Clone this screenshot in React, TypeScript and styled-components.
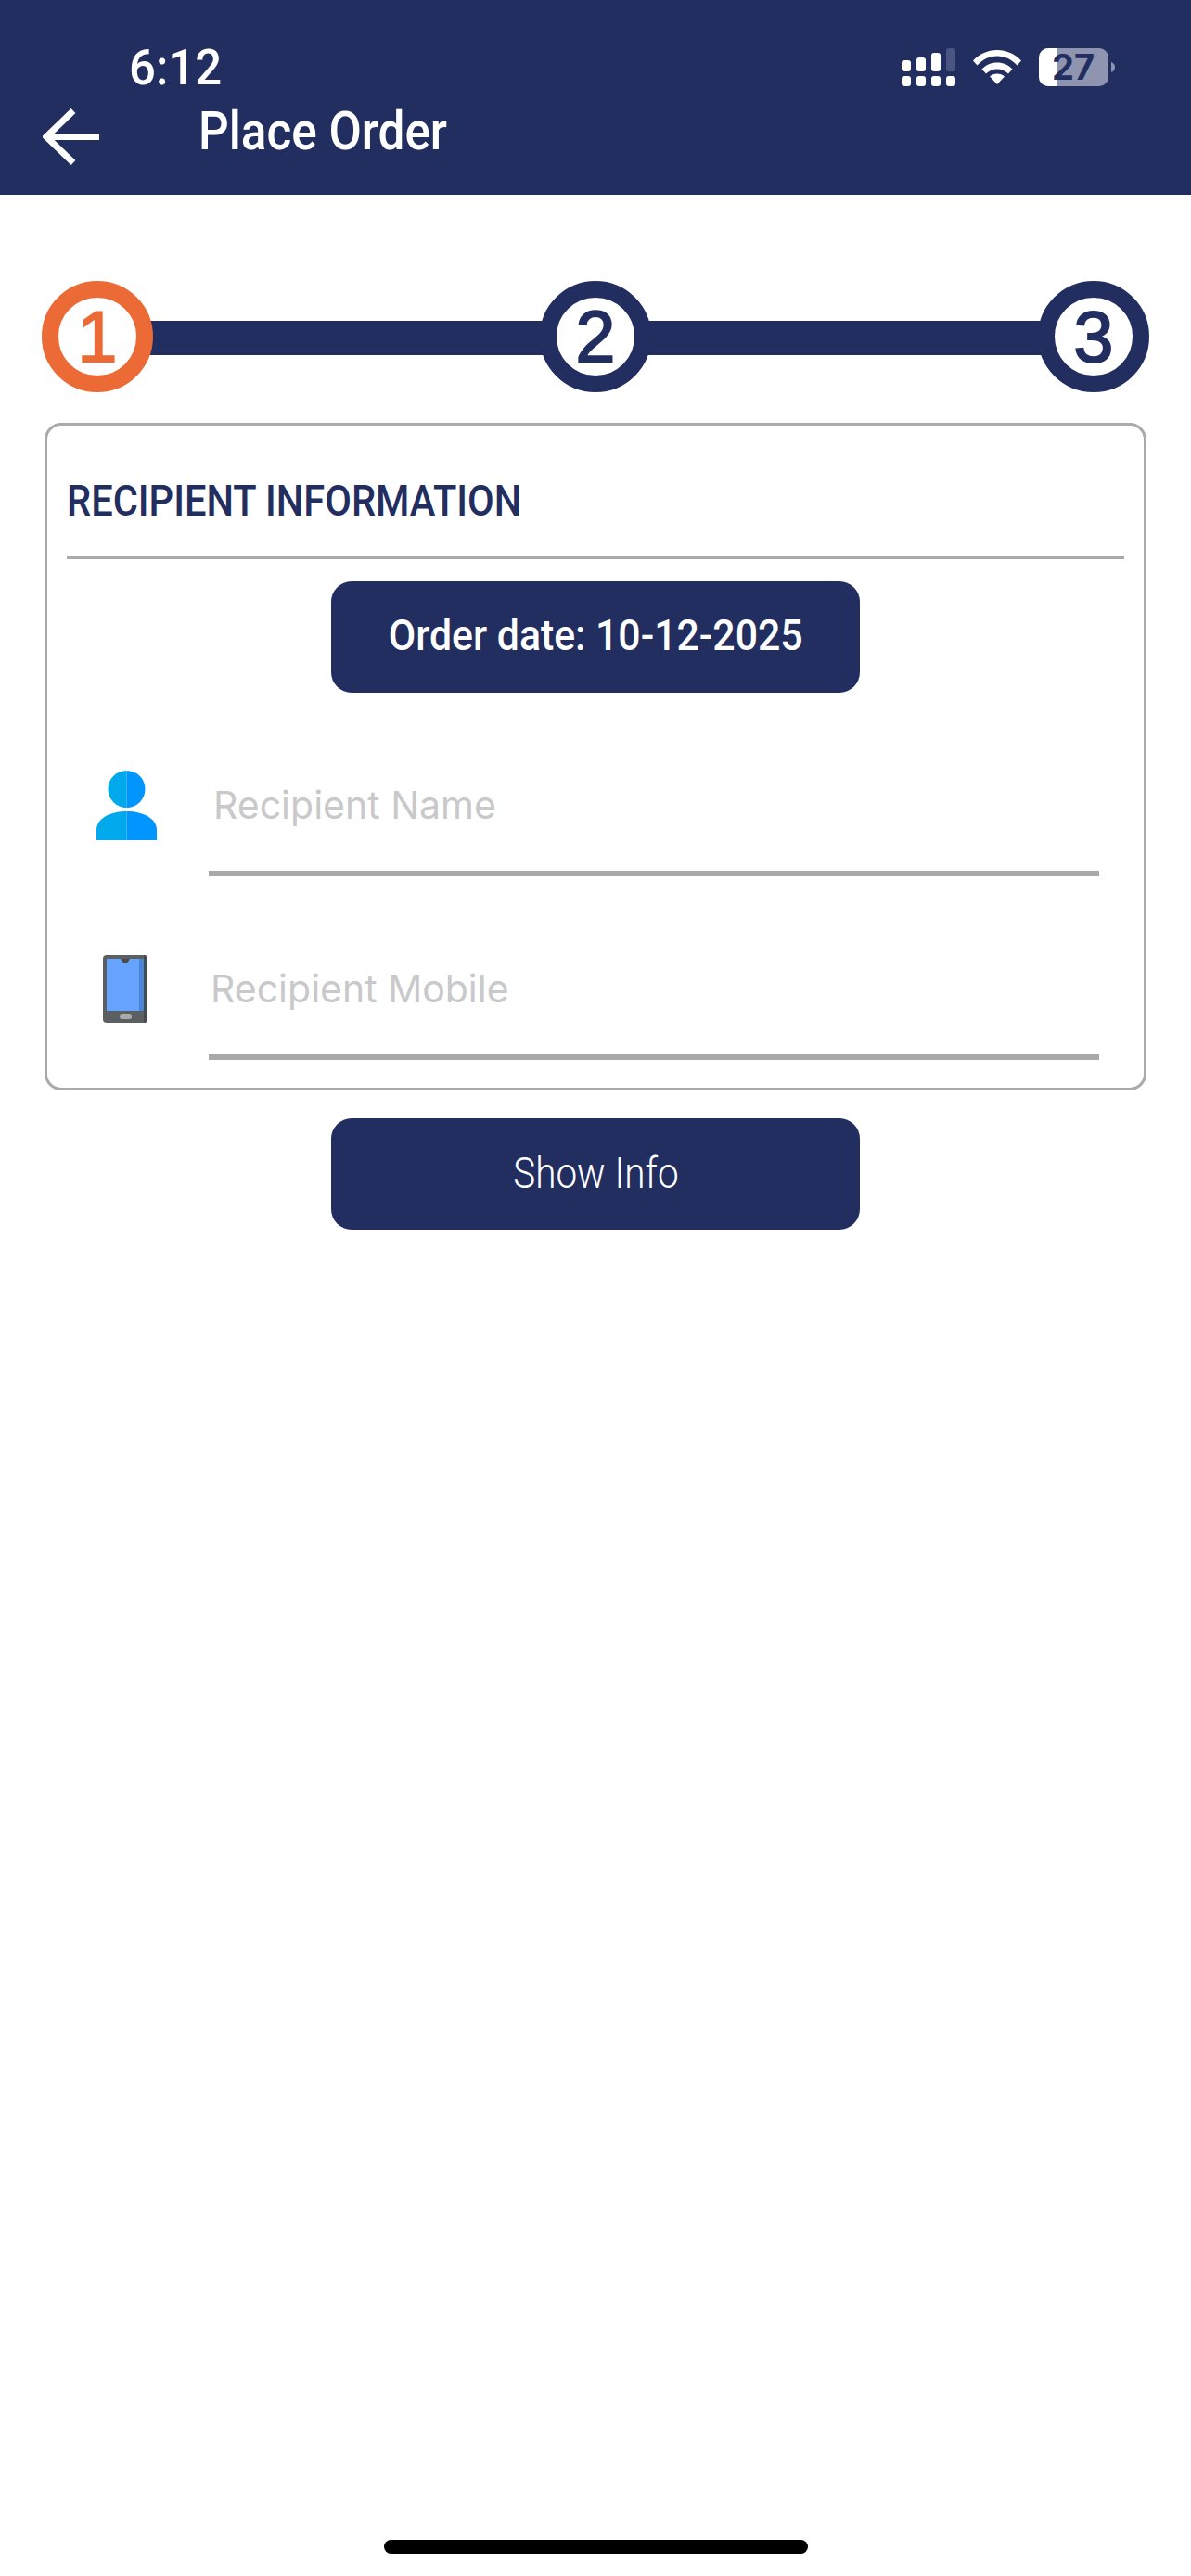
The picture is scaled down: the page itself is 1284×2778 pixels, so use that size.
import styled, { createGlobalStyle } from "styled-components";

const navy = "#222e60";
const orange = "#ec6a35";
const din = `"Roboto", "Liberation Sans", sans-serif`;

const GlobalStyle = createGlobalStyle`
  html, body {
    margin: 0;
    padding: 0;
    background: #fff;
  }
  * {
    box-sizing: border-box;
  }
`;

const Page = styled.div`
  width: 1284px;
  min-height: 2778px;
  display: flex;
  flex-direction: column;
  background: #fff;
`;

const Header = styled.header`
  height: 210px;
  background: ${navy};
  display: flex;
  flex-direction: column;
  padding-top: 47px;
`;

const StatusBar = styled.div`
  display: flex;
  align-items: center;
  justify-content: space-between;
  height: 50px;
  padding: 0 82px 0 139px;
`;

const Clock = styled.span`
  display: inline-block;
  padding-top: 2px;
  font: 500 53px/50px ${din};
  color: #fff;
  transform: scaleX(0.96);
  transform-origin: left center;
`;

const StatusIcons = styled.div`
  display: flex;
  align-items: center;
  gap: 19px;
`;

const Battery = styled.div`
  position: relative;
  width: 82px;
  height: 41px;
`;

const BatteryLevel = styled.span`
  position: absolute;
  inset: 0;
  display: flex;
  align-items: center;
  justify-content: center;
  padding-right: 8px;
  font: 700 38px/41px "Inter", sans-serif;
  color: ${navy};
`;

const TopBar = styled.div`
  display: flex;
  align-items: center;
  height: 60px;
  margin-top: 15px;
  padding-left: 46px;
`;

const BackButton = styled.button`
  display: flex;
  width: 61px;
  height: 61px;
  margin-top: 10px;
  padding: 0;
  border: 0;
  background: none;
`;

const PageTitle = styled.h1`
  display: inline-block;
  margin: 0 0 0 107px;
  font: 500 57px/60px ${din};
  color: #fff;
  white-space: nowrap;
  transform: scaleX(0.9);
  transform-origin: left center;
`;

const Stepper = styled.div`
  display: flex;
  align-items: center;
  margin: 93px 45px 33px;
`;

const Step = styled.div<{ $active?: boolean }>`
  position: relative;
  z-index: 1;
  flex: none;
  width: 120px;
  height: 120px;
  display: flex;
  align-items: center;
  justify-content: center;
  border: 18px solid ${(p) => (p.$active ? orange : navy)};
  border-radius: 50%;
  background: #fff;
  font: 400 77px/84px "Liberation Sans", sans-serif;
  -webkit-text-stroke: 2px ${(p) => (p.$active ? orange : navy)};
  color: ${(p) => (p.$active ? orange : navy)};
`;

const Connector = styled.div`
  flex: 1;
  height: 37px;
  margin: 2px -4px 0;
  background: ${navy};
`;

const Card = styled.section`
  width: 1188px;
  margin: 0 48px;
  padding: 51px 21px 30px;
  border: 3px solid #aaa;
  border-radius: 18px;
  display: flex;
  flex-direction: column;
`;

const CardTitle = styled.h2`
  display: inline-block;
  margin: 0;
  font: 500 47px/60px ${din};
  color: ${navy};
  white-space: nowrap;
  transform: scaleX(0.885);
  transform-origin: left center;
`;

const Divider = styled.hr`
  width: 100%;
  height: 3px;
  margin: 30px 0 24px;
  border: 0;
  background: #aaa;
`;

const PillButton = styled.button`
  flex: none;
  display: flex;
  align-items: center;
  justify-content: center;
  align-self: center;
  width: 570px;
  height: 120px;
  border: 0;
  border-radius: 22px;
  background: ${navy};
  color: #fff;
`;

const PillLabel = styled.span<{ $light?: boolean }>`
  display: inline-block;
  padding-bottom: ${(p) => (p.$light ? 2 : 4)}px;
  font: ${(p) => (p.$light ? 300 : 500)} 46px/60px ${din};
  white-space: nowrap;
  transform: scaleX(${(p) => (p.$light ? 0.88 : 0.93)});
`;

const Fields = styled.div`
  display: flex;
  flex-direction: column;
  gap: 86px;
  margin-top: 86px;
`;

const FieldRow = styled.div`
  display: flex;
  align-items: flex-start;
  padding-right: 27px;
`;

const IconSlot = styled.div`
  flex: none;
  width: 129px;
  height: 70px;
  margin-right: 24px;
  display: flex;
  align-items: center;
  justify-content: center;
`;

const FieldBody = styled.div`
  flex: 1;
  padding-bottom: 36px;
  border-bottom: 6px solid #a9a9a9;
`;

const FieldInput = styled.input<{ $inset: number }>`
  display: block;
  width: 100%;
  height: 70px;
  padding: 0 0 0 ${(p) => p.$inset}px;
  border: 0;
  outline: 0;
  background: none;
  font: 400 41px/70px "Inter", sans-serif;
  &::placeholder {
    color: #c9c9cb;
    opacity: 1;
  }
`;

const ShowInfo = styled(PillButton)`
  margin-top: 30px;
`;

const HomeBar = styled.div`
  flex: none;
  align-self: center;
  width: 457px;
  height: 15px;
  margin-top: auto;
  margin-bottom: 24px;
  border-radius: 8px;
  background: #000;
`;

function SignalIcon() {
  return (
    <svg width="58" height="41" viewBox="0 0 58 41" fill="#fff">
      <rect x="0" y="13" width="10" height="12" rx="3" />
      <rect x="16" y="10" width="10" height="15" rx="3" />
      <rect x="32" y="5" width="10" height="20" rx="3" />
      <rect x="48" y="0" width="10" height="25" rx="3" fill="#4a5582" />
      <rect x="0" y="30" width="10" height="11" rx="3" />
      <rect x="16" y="30" width="10" height="11" rx="3" />
      <rect x="32" y="30" width="10" height="11" rx="3" />
      <rect x="48" y="30" width="10" height="11" rx="3" />
    </svg>
  );
}

function WifiIcon() {
  return (
    <svg width="52" height="38" viewBox="0 0 52 38" fill="#fff">
      <path d="M0 12.500C7 5 16 1 26 1s19 4 26 11.500l-4.500 5C41.500 11 34.500 7.500 26 7.500S10.500 11 4.500 17.500z" />
      <path d="M9.500 21.500C14 17 19.500 14.500 26 14.500S38 17 42.500 21.500L38 26.500C35 23.500 31 21.500 26 21.500S17 23.500 14 26.500z" />
      <path d="M18 29.500C20 27.500 23 26.500 26 26.500S32 27.500 34 29.500L26 38z" />
    </svg>
  );
}

function BatteryShape() {
  return (
    <svg width="82" height="41" viewBox="0 0 82 41">
      <rect x="0" y="0" width="75" height="41" rx="10" fill="#8f95b0" />
      <path d="M10 0H20V41H10A10 10 0 0 1 0 31V10A10 10 0 0 1 10 0z" fill="#fff" />
      <path d="M78 15C81 16 82 18 82 20.500S81 25 78 26z" fill="#8f95b0" />
    </svg>
  );
}

function BackArrow() {
  return (
    <svg width="61" height="61" viewBox="0 0 61 61" fill="none" stroke="#fff" strokeWidth="7">
      <path d="M61 30.500H5" />
      <path d="M33 2.500L4 30.500L33 58.500" />
    </svg>
  );
}

function PersonIcon() {
  return (
    <svg width="65" height="75" viewBox="0 0 65 75">
      <path d="M32.500 0a20 20 0 0 0 0 40z" fill="#00a9ec" />
      <path d="M32.500 0a20 20 0 0 1 0 40z" fill="#0095ff" />
      <path d="M32.500 44C14 44 0 52 0 64V75H32.500z" fill="#00a9ec" />
      <path d="M32.500 44C51 44 65 52 65 64V75H32.500z" fill="#0095ff" />
    </svg>
  );
}

function PhoneIcon() {
  return (
    <svg width="52" height="73" viewBox="0 0 52 73">
      <rect x="0" y="0" width="48" height="73" rx="4" fill="#5a5f61" />
      <path d="M44 0a4 4 0 0 1 4 4V69a4 4 0 0 1-4 4z" fill="#464b4d" />
      <rect x="4" y="4" width="40" height="56" fill="#66a3ff" />
      <rect x="39" y="4" width="5" height="56" fill="#4a86d8" />
      <path d="M19 4H29L26.500 8C25 9.500 23 9.500 21.500 8z" fill="#464b4d" />
      <rect x="18" y="64" width="13" height="5" rx="2.500" fill="#aaa" />
    </svg>
  );
}

export default function App() {
  return (
    <>
      <GlobalStyle />
      <Page>
        <Header>
          <StatusBar>
            <Clock>6:12</Clock>
            <StatusIcons>
              <SignalIcon />
              <WifiIcon />
              <Battery>
                <BatteryShape />
                <BatteryLevel>27</BatteryLevel>
              </Battery>
            </StatusIcons>
          </StatusBar>
          <TopBar>
            <BackButton aria-label="Back">
              <BackArrow />
            </BackButton>
            <PageTitle>Place Order</PageTitle>
          </TopBar>
        </Header>

        <Stepper>
          <Step $active>1</Step>
          <Connector />
          <Step>2</Step>
          <Connector />
          <Step>3</Step>
        </Stepper>

        <Card>
          <CardTitle>RECIPIENT INFORMATION</CardTitle>
          <Divider />
          <PillButton>
            <PillLabel>Order date: 10-12-2025</PillLabel>
          </PillButton>
          <Fields>
            <FieldRow>
              <IconSlot>
                <PersonIcon />
              </IconSlot>
              <FieldBody>
                <FieldInput $inset={5} placeholder="Recipient Name" />
              </FieldBody>
            </FieldRow>
            <FieldRow>
              <IconSlot>
                <PhoneIcon />
              </IconSlot>
              <FieldBody>
                <FieldInput $inset={2} placeholder="Recipient Mobile" />
              </FieldBody>
            </FieldRow>
          </Fields>
        </Card>

        <ShowInfo>
          <PillLabel $light>Show Info</PillLabel>
        </ShowInfo>

        <HomeBar />
      </Page>
    </>
  );
}
